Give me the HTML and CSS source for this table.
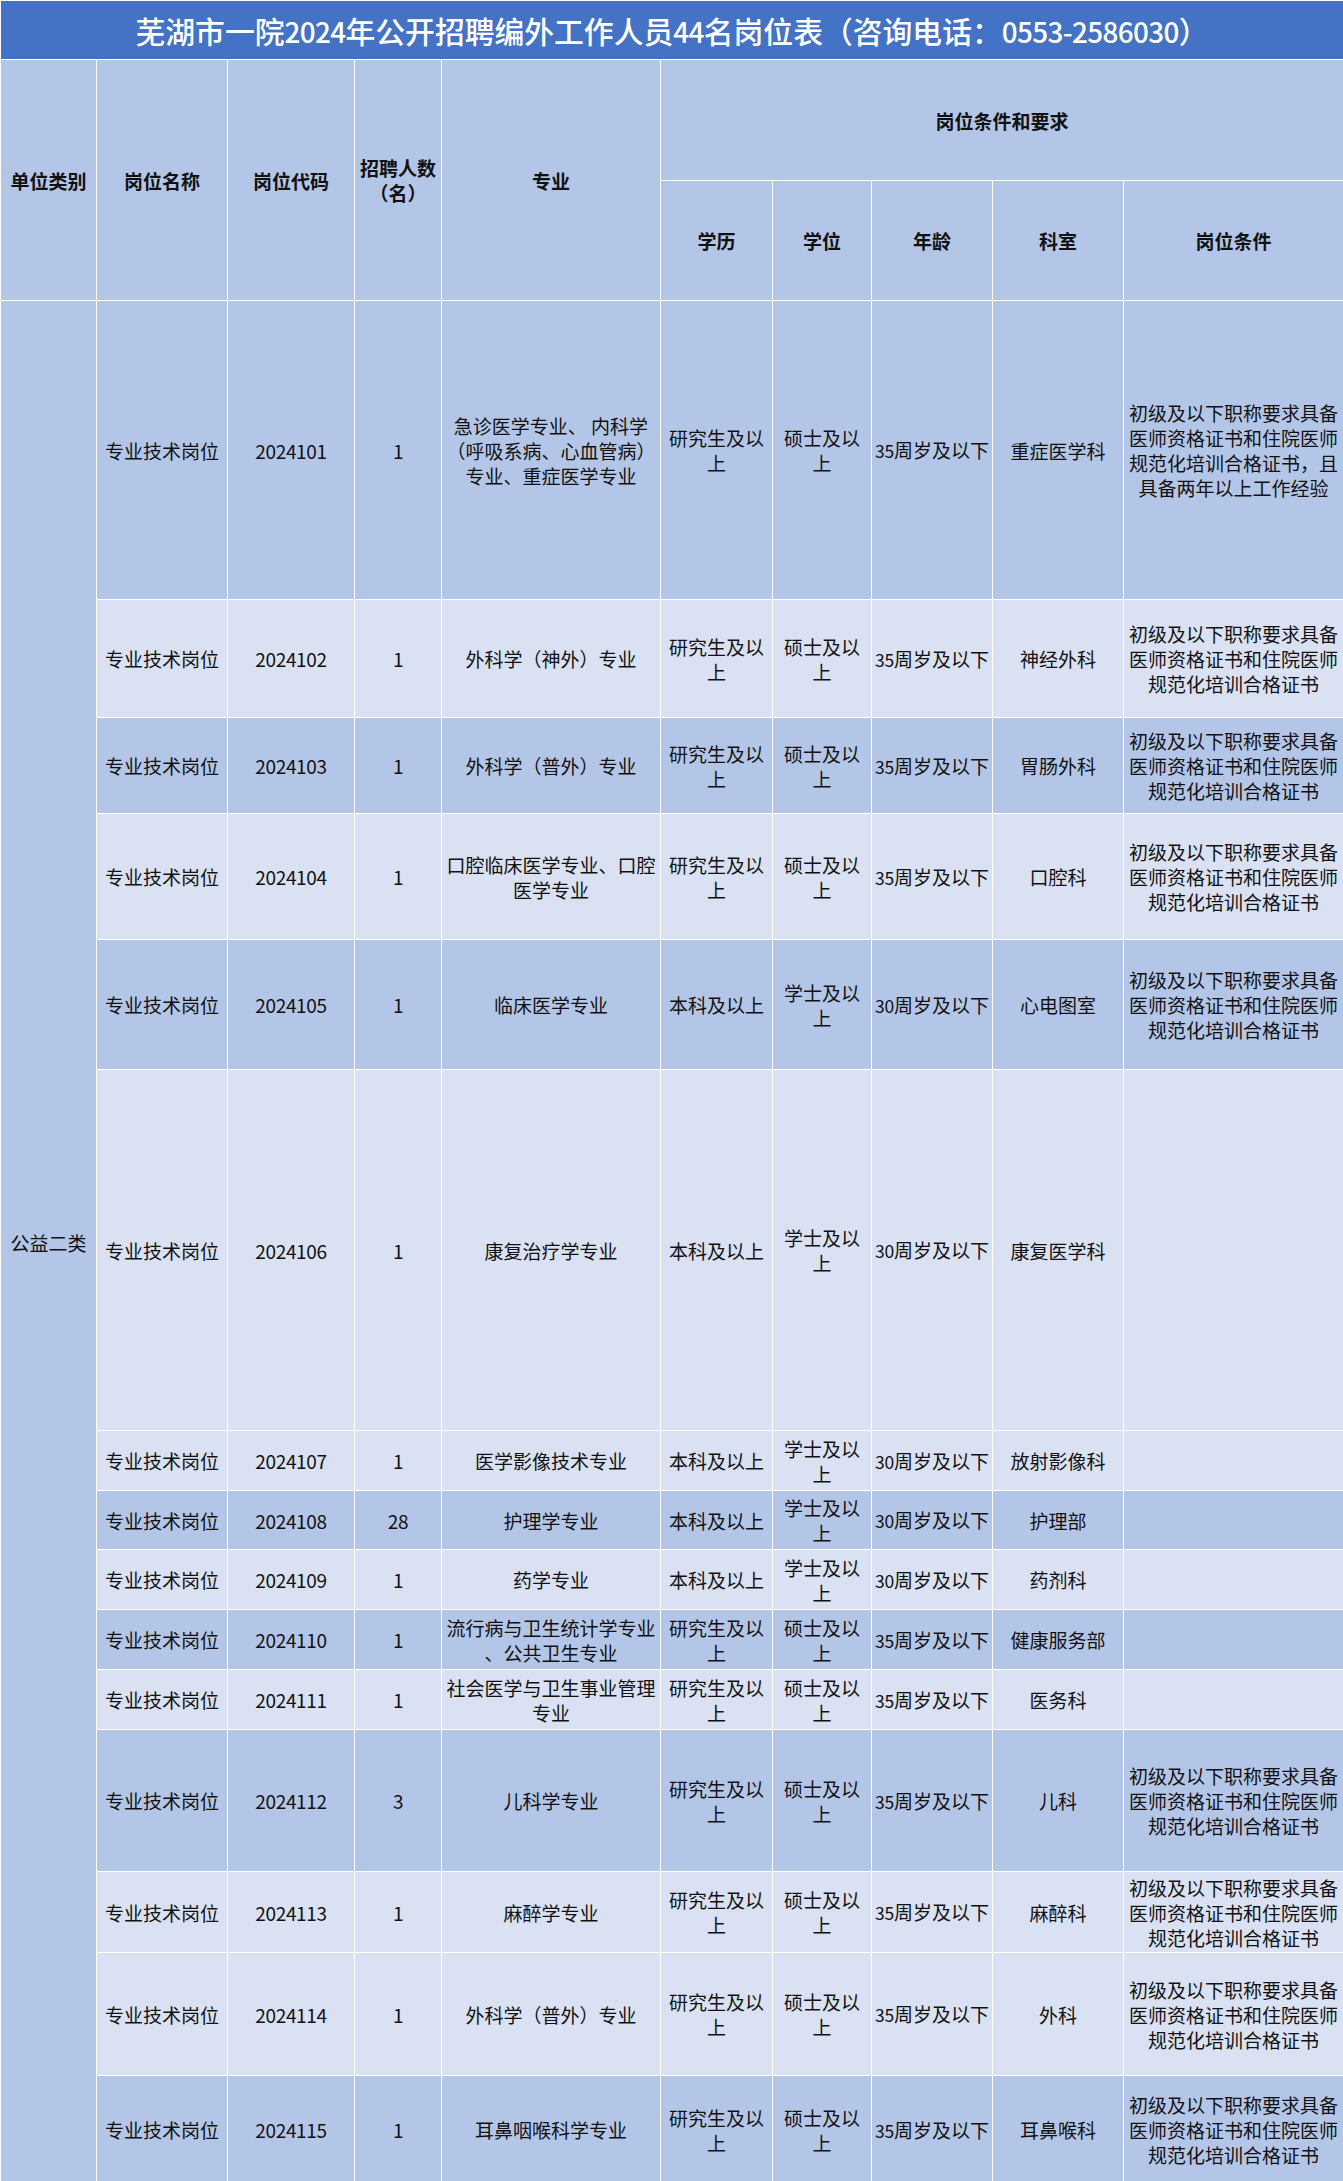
FILE: index.html
```html
<!DOCTYPE html>
<html lang="zh-CN">
<head>
<meta charset="utf-8">
<title>芜湖市一院2024年公开招聘编外工作人员44名岗位表</title>
<link rel="stylesheet" href="styles.css">
</head>
<body>
<table class="sheet">
  <colgroup>
    <col class="c-unit"><col class="c-name"><col class="c-code"><col class="c-num"><col class="c-major">
    <col class="c-edu"><col class="c-deg"><col class="c-age"><col class="c-dept"><col class="c-cond">
  </colgroup>
  <thead>
    <tr class="title-row"><th colspan="10" class="title">芜湖市一院<span class="num">2024</span>年公开招聘编外工作人员<span class="num">44</span>名岗位表（咨询电话：<span class="num">0553-2586030</span>）</th></tr>
    <tr class="head h-121">
      <th rowspan="2">单位类别</th>
      <th rowspan="2">岗位名称</th>
      <th rowspan="2">岗位代码</th>
      <th rowspan="2">招聘人数<br>（名）</th>
      <th rowspan="2">专业</th>
      <th colspan="5">岗位条件和要求</th>
    </tr>
    <tr class="head h-120">
      <th>学历</th><th>学位</th><th>年龄</th><th>科室</th><th>岗位条件</th>
    </tr>
  </thead>
  <tbody>
    <tr class="dark h-299">
      <td rowspan="15" class="cat">公益二类</td>
      <td>专业技术岗位</td><td class="num">2024101</td><td class="num">1</td>
      <td>急诊医学专业、 内科学<br>（呼吸系病、心血管病）<br>专业、重症医学专业</td>
      <td>研究生及以<br>上</td><td>硕士及以<br>上</td><td><span class="num">35</span>周岁及以下</td><td>重症医学科</td>
      <td>初级及以下职称要求具备<br>医师资格证书和住院医师<br>规范化培训合格证书，且<br>具备两年以上工作经验</td>
    </tr>
    <tr class="light h-118">
      <td>专业技术岗位</td><td class="num">2024102</td><td class="num">1</td><td>外科学（神外）专业</td>
      <td>研究生及以<br>上</td><td>硕士及以<br>上</td><td><span class="num">35</span>周岁及以下</td><td>神经外科</td>
      <td>初级及以下职称要求具备<br>医师资格证书和住院医师<br>规范化培训合格证书</td>
    </tr>
    <tr class="dark h-96">
      <td>专业技术岗位</td><td class="num">2024103</td><td class="num">1</td><td>外科学（普外）专业</td>
      <td>研究生及以<br>上</td><td>硕士及以<br>上</td><td><span class="num">35</span>周岁及以下</td><td>胃肠外科</td>
      <td>初级及以下职称要求具备<br>医师资格证书和住院医师<br>规范化培训合格证书</td>
    </tr>
    <tr class="light h-126">
      <td>专业技术岗位</td><td class="num">2024104</td><td class="num">1</td><td>口腔临床医学专业、口腔<br>医学专业</td>
      <td>研究生及以<br>上</td><td>硕士及以<br>上</td><td><span class="num">35</span>周岁及以下</td><td>口腔科</td>
      <td>初级及以下职称要求具备<br>医师资格证书和住院医师<br>规范化培训合格证书</td>
    </tr>
    <tr class="dark h-130">
      <td>专业技术岗位</td><td class="num">2024105</td><td class="num">1</td><td>临床医学专业</td>
      <td>本科及以上</td><td>学士及以<br>上</td><td><span class="num">30</span>周岁及以下</td><td>心电图室</td>
      <td>初级及以下职称要求具备<br>医师资格证书和住院医师<br>规范化培训合格证书</td>
    </tr>
    <tr class="light h-361">
      <td>专业技术岗位</td><td class="num">2024106</td><td class="num">1</td><td>康复治疗学专业</td>
      <td>本科及以上</td><td>学士及以<br>上</td><td><span class="num">30</span>周岁及以下</td><td>康复医学科</td><td></td>
    </tr>
    <tr class="light h-60">
      <td>专业技术岗位</td><td class="num">2024107</td><td class="num">1</td><td>医学影像技术专业</td>
      <td>本科及以上</td><td>学士及以<br>上</td><td><span class="num">30</span>周岁及以下</td><td>放射影像科</td><td></td>
    </tr>
    <tr class="dark h-59">
      <td>专业技术岗位</td><td class="num">2024108</td><td class="num">28</td><td>护理学专业</td>
      <td>本科及以上</td><td>学士及以<br>上</td><td><span class="num">30</span>周岁及以下</td><td>护理部</td><td></td>
    </tr>
    <tr class="light h-60">
      <td>专业技术岗位</td><td class="num">2024109</td><td class="num">1</td><td>药学专业</td>
      <td>本科及以上</td><td>学士及以<br>上</td><td><span class="num">30</span>周岁及以下</td><td>药剂科</td><td></td>
    </tr>
    <tr class="dark h-60">
      <td>专业技术岗位</td><td class="num">2024110</td><td class="num">1</td><td>流行病与卫生统计学专业<br>、公共卫生专业</td>
      <td>研究生及以<br>上</td><td>硕士及以<br>上</td><td><span class="num">35</span>周岁及以下</td><td>健康服务部</td><td></td>
    </tr>
    <tr class="light h-60">
      <td>专业技术岗位</td><td class="num">2024111</td><td class="num">1</td><td>社会医学与卫生事业管理<br>专业</td>
      <td>研究生及以<br>上</td><td>硕士及以<br>上</td><td><span class="num">35</span>周岁及以下</td><td>医务科</td><td></td>
    </tr>
    <tr class="dark h-142">
      <td>专业技术岗位</td><td class="num">2024112</td><td class="num">3</td><td>儿科学专业</td>
      <td>研究生及以<br>上</td><td>硕士及以<br>上</td><td><span class="num">35</span>周岁及以下</td><td>儿科</td>
      <td>初级及以下职称要求具备<br>医师资格证书和住院医师<br>规范化培训合格证书</td>
    </tr>
    <tr class="light h-81">
      <td>专业技术岗位</td><td class="num">2024113</td><td class="num">1</td><td>麻醉学专业</td>
      <td>研究生及以<br>上</td><td>硕士及以<br>上</td><td><span class="num">35</span>周岁及以下</td><td>麻醉科</td>
      <td>初级及以下职称要求具备<br>医师资格证书和住院医师<br>规范化培训合格证书</td>
    </tr>
    <tr class="light h-123">
      <td>专业技术岗位</td><td class="num">2024114</td><td class="num">1</td><td>外科学（普外）专业</td>
      <td>研究生及以<br>上</td><td>硕士及以<br>上</td><td><span class="num">35</span>周岁及以下</td><td>外科</td>
      <td>初级及以下职称要求具备<br>医师资格证书和住院医师<br>规范化培训合格证书</td>
    </tr>
    <tr class="dark h-108">
      <td>专业技术岗位</td><td class="num">2024115</td><td class="num">1</td><td>耳鼻咽喉科学专业</td>
      <td>研究生及以<br>上</td><td>硕士及以<br>上</td><td><span class="num">35</span>周岁及以下</td><td>耳鼻喉科</td>
      <td>初级及以下职称要求具备<br>医师资格证书和住院医师<br>规范化培训合格证书</td>
    </tr>
  </tbody>
</table>
</body>
</html>
```
FILE: styles.css
```css
html, body {
  margin: 0;
  padding: 0;
  background: #ffffff;
}

body {
  font-family: "Noto Sans CJK SC", "Noto Sans", sans-serif;
  color: #111111;
}

.sheet {
  width: 1343px;
  table-layout: fixed;
  border-collapse: collapse;
}

.c-unit { width: 96px; }
.c-name { width: 131px; }
.c-code { width: 127px; }
.c-num { width: 87px; }
.c-major { width: 219px; }
.c-edu { width: 112px; }
.c-deg { width: 99px; }
.c-age { width: 121px; }
.c-dept { width: 131px; }
.c-cond { width: 220px; }

.sheet th,
.sheet td {
  border: 1px solid #ffffff;
  padding: 0 1px;
  text-align: center;
  vertical-align: middle;
  font-size: 19px;
  line-height: 25px;
  white-space: nowrap;
  overflow: visible;
}

.sheet th {
  font-weight: bold;
}

.num {
  font-size: 17.5px;
  letter-spacing: -0.3px;
}

.title-row {
  height: 59px;
}

.sheet th.title {
  background: #4472c4;
  color: #ffffff;
  font-size: 29.8px;
  line-height: 36px;
  font-weight: 500;
}

.title .num {
  font-size: 27.8px;
  letter-spacing: -0.6px;
}

.head th {
  background: #b4c6e7;
}

.dark td {
  background: #b4c6e7;
}

.light td {
  background: #d9e1f2;
}

.sheet td.cat {
  background: #b4c6e7;
}

.h-121 { height: 121px; }
.h-120 { height: 120px; }
.h-299 { height: 299px; }
.h-118 { height: 118px; }
.h-96 { height: 96px; }
.h-126 { height: 126px; }
.h-130 { height: 130px; }
.h-361 { height: 361px; }
.h-60 { height: 60px; }
.h-59 { height: 59px; }
.h-142 { height: 142px; }
.h-81 { height: 81px; }
.h-123 { height: 123px; }
.h-108 { height: 108px; }
```
